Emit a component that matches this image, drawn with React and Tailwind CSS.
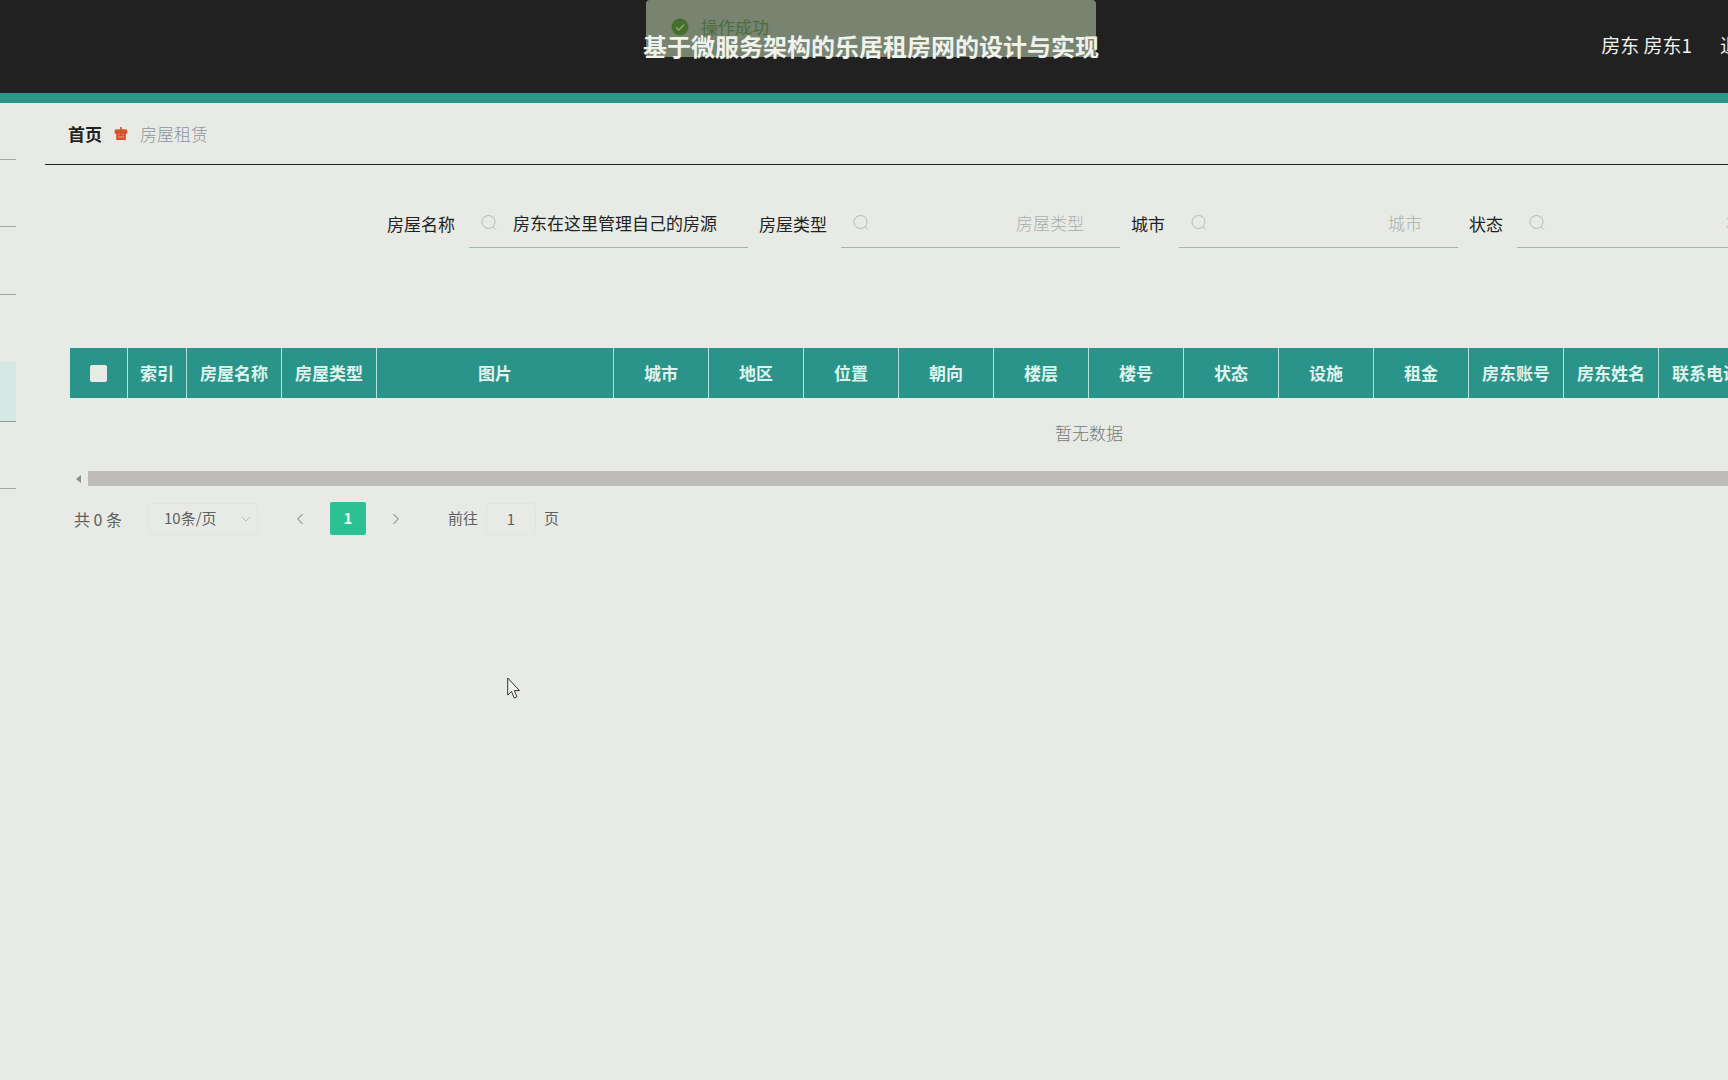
import { useState } from "react";
import { ChevronDown, ChevronLeft, ChevronRight } from "lucide-react";

const menu = [
  { id: "home", className: "h-[57px] border-b border-[#a3a8a5]" },
  { id: "center", className: "h-[67px] border-b border-[#a3a8a5]" },
  { id: "type", className: "h-[68px] border-b border-[#a3a8a5]" },
  { id: "facility", className: "h-[67px]" },
  { id: "house", className: "h-[60px] border-b border-[#8f9c98] bg-[#d6e8e4]" },
  { id: "order", className: "h-[67px] border-b border-[#a3a8a5]" },
];

const filters = [
  { id: "name", label: "房屋名称", className: "pr-6 text-left" },
  { id: "type", label: "房屋类型", className: "pr-9 text-right" },
  { id: "city", label: "城市", className: "pr-9 text-right" },
  { id: "state", label: "状态", className: "pr-9 text-right" },
];

const columns = [
  { label: "索引", width: "w-[59px]" },
  { label: "房屋名称", width: "w-[95px]" },
  { label: "房屋类型", width: "w-[95px]" },
  { label: "图片", width: "w-[237px]" },
  { label: "城市", width: "w-[95px]" },
  { label: "地区", width: "w-[95px]" },
  { label: "位置", width: "w-[95px]" },
  { label: "朝向", width: "w-[95px]" },
  { label: "楼层", width: "w-[95px]" },
  { label: "楼号", width: "w-[95px]" },
  { label: "状态", width: "w-[95px]" },
  { label: "设施", width: "w-[95px]" },
  { label: "租金", width: "w-[95px]" },
  { label: "房东账号", width: "w-[95px]" },
  { label: "房东姓名", width: "w-[95px]" },
  { label: "联系电话", width: "w-[95px]" },
  { label: "操作", width: "w-auto" },
];

const SearchIcon = () => (
  <svg
    viewBox="0 0 16 16"
    className="absolute top-4 left-3 size-4 text-[#b4bab7]"
    fill="none"
    stroke="currentColor"
  >
    <circle cx="7.5" cy="7" r="6.5" />
    <path d="M12 11.500l3 3" />
  </svg>
);

const Header = () => (
  <header className="grid h-[103px] grid-cols-[1fr_auto_1fr] overflow-hidden border-b-[10px] border-[#2c9489] bg-[#212121] pb-[2px] pl-[14px] text-[#f0f2ee]">
    <div></div>
    <div className="relative flex items-center">
      {/* Success message */}
      <div
        role="status"
        className="absolute inset-x-[3px] top-0 flex h-[57px] items-center gap-3 rounded-sm bg-[#788370] pb-1 pl-[25px] text-[17px] leading-none text-[#4b6e40]"
      >
        <svg viewBox="0 0 18 18" className="size-[18px]">
          <circle cx="9" cy="9" r="8.5" fill="#44702b" />
          <path
            d="M5 9.3l2.8 2.7L13 6.8"
            fill="none"
            stroke="#8fa481"
            strokeWidth="1.5"
          />
        </svg>
        操作成功
      </div>
      <h1 className="relative text-2xl font-bold">
        基于微服务架构的乐居租房网的设计与实现
      </h1>
    </div>
    <div className="-mr-[68px] flex items-center justify-end gap-7 text-[19px] whitespace-nowrap">
      <span>房东 房东1</span>
      <button type="button">退出登录</button>
    </div>
  </header>
);

const Sidebar = () => (
  <ul className="w-4 shrink-0">
    {menu.map((item) => (
      <li key={item.id} className={item.className}></li>
    ))}
  </ul>
);

const Breadcrumb = () => (
  <nav className="flex h-[62px] items-center gap-3 border-b border-[#222] pl-[23px] text-[17px]">
    <a href="#" className="font-bold text-[#222]">
      首页
    </a>
    <svg viewBox="0 0 14 14" className="size-[14px]">
      <path
        d="M6.200 0h1.600v2.200l5.200.3.500 3.500-1.700 1.200V13H2.200V7.200L.5 6 1 2.500l5.200-.3z"
        fill="#d9512c"
      />
      <path d="M4 7.500h1.500M8.500 7.500H10M4 10h6" stroke="#f0a184" fill="none" />
    </svg>
    <span className="font-light text-[#8f939e]">房屋租赁</span>
  </nav>
);

const Filters = () => {
  const [values, setValues] = useState({ name: "房东在这里管理自己的房源" });

  return (
    <form className="mt-[34px] flex gap-[11px] pl-[342px] text-[17px] text-[#222]">
      {filters.map((f) => (
        <div key={f.id} className="flex shrink-0 items-center gap-[14px]">
          <label htmlFor={f.id}>{f.label}</label>
          <div className="relative">
            <SearchIcon />
            <input
              id={f.id}
              type="text"
              placeholder={f.label}
              value={values[f.id] || ""}
              onChange={(e) =>
                setValues({ ...values, [f.id]: e.target.value })
              }
              className={`block h-[49px] w-[279px] border-b border-[#9db5af] bg-transparent pb-[2px] pl-11 outline-none placeholder:font-light placeholder:text-[#a9aeab] ${f.className}`}
            />
          </div>
        </div>
      ))}
    </form>
  );
};

const HouseTable = () => (
  <div className="mt-[100px] ml-[25px] w-[2038px]">
    <table className="w-full table-fixed border-separate border-spacing-0 text-[17px]">
      <thead>
        <tr className="h-[50px] bg-[#2a948a] text-[#dff3ec]">
          <th className="w-[58px] border-r border-[#b5e3d9]">
            <input
              type="checkbox"
              aria-label="全选"
              className="mx-auto block size-[17px] appearance-none rounded-xs bg-[#e8ebe5]"
            />
          </th>
          {columns.map((col) => (
            <th
              key={col.label}
              className={`border-r border-[#b5e3d9] p-0 font-bold whitespace-nowrap ${col.width}`}
            >
              {col.label}
            </th>
          ))}
        </tr>
      </thead>
      <tbody>
        <tr className="h-[73px]">
          <td
            colSpan={columns.length + 1}
            className="pb-1 text-center font-light text-[#75797b]"
          >
            暂无数据
          </td>
        </tr>
      </tbody>
    </table>
    {/* Horizontal scroll bar */}
    <div className="flex h-[15px] items-center pl-[6px]">
      <div className="mr-[7px] border-y-4 border-r-[5px] border-y-transparent border-r-[#8d8f8d]"></div>
      <div className="h-full flex-1 bg-[#bebbbb]"></div>
    </div>
  </div>
);

const Pagination = () => (
  <div className="mt-4 ml-[29px] flex h-[33px] items-center text-[15px] text-[#5c5f62]">
    <span className="w-[74px] text-base">共 0 条</span>
    <div className="relative">
      <select
        aria-label="每页条数"
        className="h-8 w-[110px] appearance-none rounded-sm border border-[#e1e5df] pl-[15px] outline-none"
      >
        <option>10条/页</option>
        <option>20条/页</option>
        <option>50条/页</option>
      </select>
      <ChevronDown
        className="pointer-events-none absolute top-2 right-1 size-4 text-[#a3a7a4]"
        strokeWidth={1}
      />
    </div>
    <button
      type="button"
      aria-label="上一页"
      className="ml-[33px] text-[#9da09e]"
    >
      <ChevronLeft className="size-[18px]" strokeWidth={1.5} />
    </button>
    <button
      type="button"
      className="mx-[21px] h-[33px] w-9 rounded-xs bg-[#2dc093] font-bold text-[#e8f6ee]"
    >
      1
    </button>
    <button type="button" aria-label="下一页" className="text-[#9da09e]">
      <ChevronRight className="size-[18px]" strokeWidth={1.5} />
    </button>
    <label htmlFor="page" className="ml-[43px]">
      前往
    </label>
    <input
      id="page"
      type="text"
      defaultValue="1"
      className="mx-2 h-8 w-[50px] rounded-sm border border-[#e1e5df] text-center outline-none"
    />
    <span>页</span>
  </div>
);

const App = () => {
  return (
    <div className="relative min-h-screen overflow-hidden bg-[#e8ebe5] font-['Noto_Sans_CJK_SC',sans-serif]">
      <Header />
      <div className="flex">
        <Sidebar />
        <main className="ml-[29px] min-w-0 flex-1">
          <Breadcrumb />
          <Filters />
          <HouseTable />
          <Pagination />
        </main>
      </div>

      {/* Mouse pointer */}
      <svg
        viewBox="0 0 14 22"
        className="absolute top-[677px] left-[507px] h-[22px] w-[14px]"
      >
        <path
          d="M.7 1v17l3.800-3.500L7.300 21l2.700-1.200-2.700-6.200h5.200z"
          fill="#f1f3ef"
          stroke="#333"
        />
      </svg>
    </div>
  );
};

export default App;
